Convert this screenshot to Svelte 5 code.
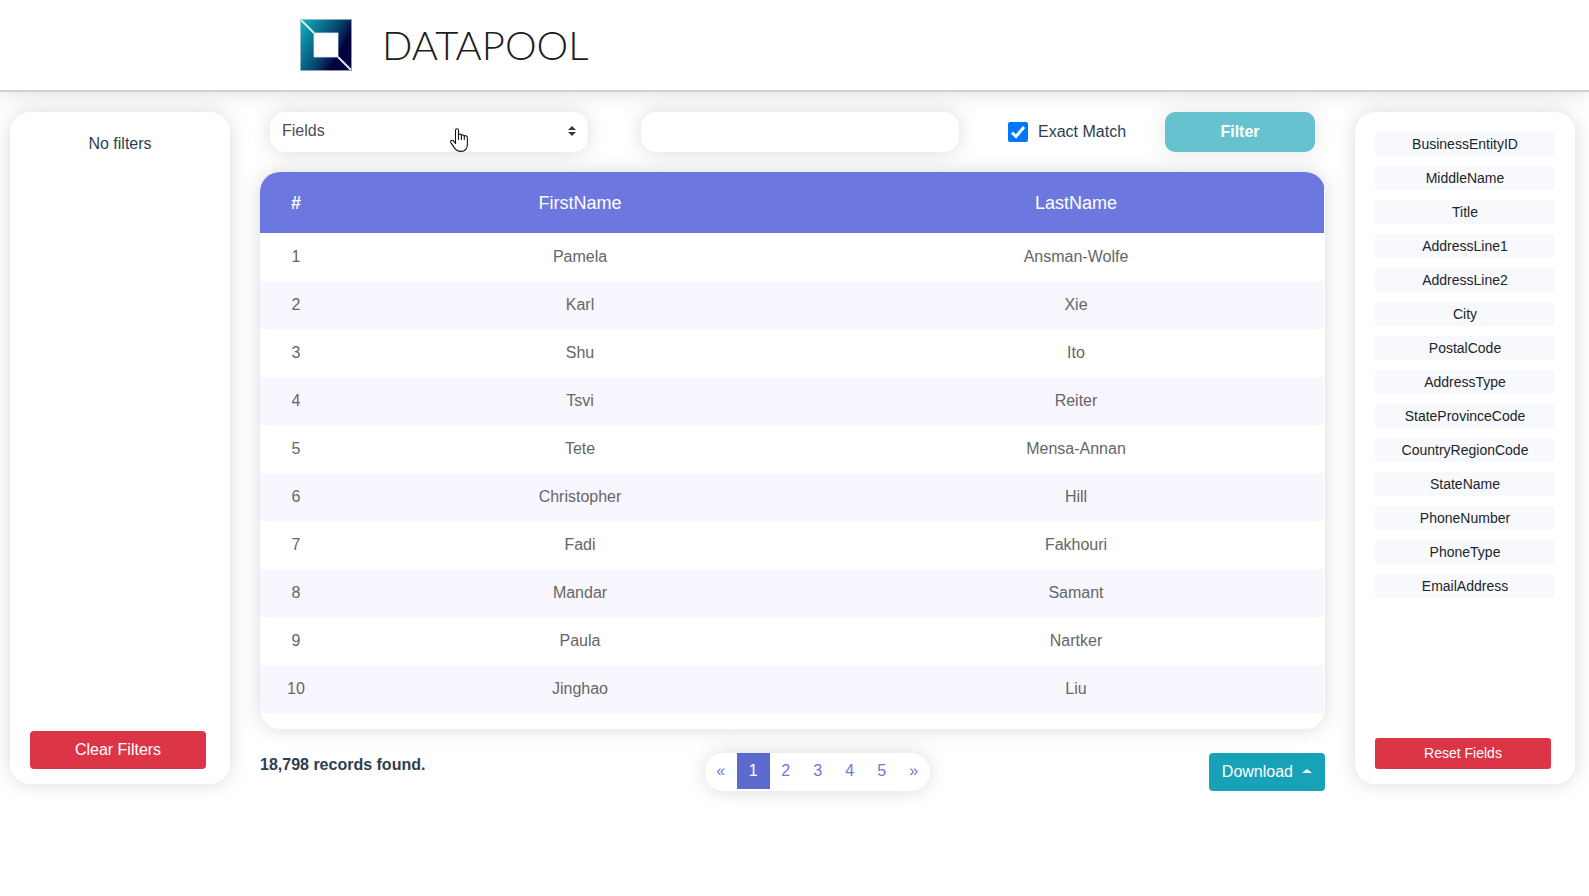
<script>
  const people = [
    ['Pamela', 'Ansman-Wolfe'],
    ['Karl', 'Xie'],
    ['Shu', 'Ito'],
    ['Tsvi', 'Reiter'],
    ['Tete', 'Mensa-Annan'],
    ['Christopher', 'Hill'],
    ['Fadi', 'Fakhouri'],
    ['Mandar', 'Samant'],
    ['Paula', 'Nartker'],
    ['Jinghao', 'Liu'],
  ];
  const fields = [
    'BusinessEntityID', 'MiddleName', 'Title', 'AddressLine1', 'AddressLine2',
    'City', 'PostalCode', 'AddressType', 'StateProvinceCode', 'CountryRegionCode',
    'StateName', 'PhoneNumber', 'PhoneType', 'EmailAddress',
  ];
  const pages = ['«', '1', '2', '3', '4', '5', '»'];
  let current = $state('1');
  let exact = $state(true);
  let term = $state('');
</script>

<header>
  <svg class="logo" width="52" height="52" viewBox="0 0 52 52" aria-hidden="true">
    <defs>
      <linearGradient id="ink" gradientUnits="userSpaceOnUse" x1="0" y1="6" x2="42" y2="30">
        <stop offset="0" stop-color="#0cb0bc" />
        <stop offset="0.45" stop-color="#086a8c" />
        <stop offset="0.75" stop-color="#063a68" />
        <stop offset="1" stop-color="#02023c" />
      </linearGradient>
    </defs>
    <rect width="52" height="52" fill="url(#ink)" />
    <path d="M1 1L14 14M38 38L51 51" stroke="#dfe6f0" stroke-width="2" />
    <rect x="14" y="14" width="24" height="24" fill="#fff" stroke="#dfe6f0" stroke-width="0.8" />
    <rect x="0.5" y="0.5" width="51" height="51" fill="none" stroke="#c5d0de" stroke-opacity="0.7" />
  </svg>
  <h1>DATAPOOL</h1>
</header>

<main>
  <aside class="panel">
    <p class="empty">No filters</p>
    <button class="btn danger" type="button">Clear Filters</button>
  </aside>

  <section class="content">
    <form class="toolbar" onsubmit={(e) => e.preventDefault()}>
      <div class="query">
        <div class="picker">
          <select class="control" aria-label="Fields">
            <option>Fields</option>
          </select>
          <svg class="pointer" width="18" height="24" viewBox="0 0 18 24" aria-hidden="true">
            <path
              d="M5.5 15.5V2.2C5.5 .2 8.5 .2 8.5 2.2V6.6C9.2 5.8 11.2 6 11.3 7.2C12.2 6.6 13.9 6.8 14.2 8C15.8 7.2 17.4 8 17.4 9.8V16C17.4 21 14.8 23.4 10.8 23.4C7.6 23.4 5.8 22 4.2 19.6L.9 14.6C0 12.8 2 11.6 3.4 12.8L5.5 15.2M8.5 6.6V11.4M11.4 7.2V11.4M14.3 8V11.4"
              fill="#fff" stroke="#15151f" stroke-width="1.1" stroke-linecap="round" stroke-linejoin="round" />
          </svg>
        </div>
        <input class="control term" type="text" aria-label="Value" bind:value={term} />
      </div>
      <label class="exact">
        <input type="checkbox" bind:checked={exact} />
        <span>Exact Match</span>
      </label>
      <button class="filter" type="submit" disabled>Filter</button>
    </form>

    <div class="card">
      <table>
        <thead>
          <tr><th class="num">#</th><th>FirstName</th><th>LastName</th></tr>
        </thead>
        <tbody>
          {#each people as [first, last], i}
            <tr><td>{i + 1}</td><td>{first}</td><td>{last}</td></tr>
          {/each}
        </tbody>
      </table>
    </div>

    <div class="footer">
      <strong>18,798 records found.</strong>
      <nav aria-label="Pages">
        {#each pages as page}
          <button type="button" class:active={page === current} onclick={() => (current = page)}>{page}</button>
        {/each}
      </nav>
      <button class="btn download" type="button">Download<span class="caret"></span></button>
    </div>
  </section>

  <aside class="panel">
    <div class="chips">
      {#each fields as field}
        <button class="chip" type="button">{field}</button>
      {/each}
    </div>
    <button class="btn danger small" type="button">Reset Fields</button>
  </aside>
</main>

<style>
  :global(body) {
    margin: 0;
    background: #fff;
    color: #2c3e50;
    font: 16px/24px "Liberation Sans", Arial, sans-serif;
  }
  :global(#app) *,
  header, main {
    box-sizing: border-box;
  }
  button, input, select {
    font: inherit;
    margin: 0;
  }
  header {
    display: flex;
    align-items: center;
    gap: 30px;
    height: 92px;
    padding: 0 300px;
    border-bottom: 2px solid #d3d0d0;
    box-shadow: 0 0 20px rgba(0, 0, 0, 0.15);
  }
  .logo {
    flex: none;
  }
  h1 {
    margin: 0;
    color: #1c1c1c;
    font: 300 40px/48px Lato, sans-serif;
  }
  main {
    display: grid;
    grid-template-columns: 220px minmax(0, 1fr) 220px;
    gap: 30px;
    align-items: start;
    padding: 20px 14px 20px 10px;
  }
  .panel {
    display: flex;
    flex-direction: column;
    justify-content: space-between;
    align-items: flex-start;
    min-height: 75vh;
    padding: 20px 20px 15px;
    border-radius: 20px;
    background: #fff;
    box-shadow: 0 0 20px rgba(0, 0, 0, 0.15);
  }
  .empty {
    align-self: stretch;
    margin: 0;
    text-align: center;
  }
  .btn {
    padding: 6px 12px;
    border: 1px solid transparent;
    border-radius: 4px;
    color: #fff;
    line-height: 24px;
    cursor: pointer;
  }
  .danger {
    width: 176px;
    background: #dc3545;
  }
  .small {
    padding: 4px 8px;
    border-radius: 3px;
    font-size: 14px;
    line-height: 21px;
  }
  .toolbar {
    display: grid;
    grid-template-columns: minmax(0, 1fr) 118px 150px;
    column-gap: 39px;
    align-items: center;
    padding: 0 10px;
  }
  .query {
    display: grid;
    grid-template-columns: repeat(2, minmax(0, 1fr));
    column-gap: 53px;
    padding-right: 10px;
  }
  .picker {
    position: relative;
  }
  .control {
    display: block;
    width: 100%;
    height: 40px;
    border: 0;
    border-radius: 15px;
    outline: 0;
    background: #fff;
    color: #495057;
    box-shadow: 0 0 20px rgba(0, 0, 0, 0.15);
  }
  select.control {
    padding: 6px 28px 8px 12px;
    appearance: none;
    background: #fff url("data:image/svg+xml,%3csvg xmlns='http://www.w3.org/2000/svg' width='8' height='10' viewBox='0 0 4 5'%3e%3cpath fill='%23343a40' d='M2 0L0 2h4zm0 5L0 3h4z'/%3e%3c/svg%3e") no-repeat right 12px top 14px / 8px 10px;
  }
  .pointer {
    position: absolute;
    left: 180px;
    top: 16px;
    pointer-events: none;
  }
  .term {
    padding: 6px 12px;
  }
  .exact {
    display: flex;
    align-items: center;
    gap: 10px;
    white-space: nowrap;
  }
  .exact input {
    flex: none;
    width: 20px;
    height: 20px;
    border-radius: 2px;
    appearance: none;
    background: #0075ff url("data:image/svg+xml,%3csvg xmlns='http://www.w3.org/2000/svg' viewBox='0 0 20 20'%3e%3cpath fill='none' stroke='white' stroke-width='3' d='M4 10.5l4 4L16 5'/%3e%3c/svg%3e");
  }
  .exact input:not(:checked) {
    background: #fff;
    border: 1px solid #767676;
  }
  .filter {
    height: 40px;
    border: 0;
    border-radius: 10px;
    background: #17a2b8;
    color: #fff;
    font-weight: 700;
    opacity: 0.65;
    box-shadow: 0 0 20px rgba(0, 0, 0, 0.15);
  }
  .card {
    margin-top: 20px;
    padding: 0 1px 16px 0;
    overflow: hidden;
    border-radius: 20px;
    background: #fff;
    box-shadow: 0 0 20px rgba(0, 0, 0, 0.15);
  }
  table {
    width: 100%;
    table-layout: fixed;
    border-collapse: collapse;
    text-align: center;
  }
  th {
    height: 61px;
    padding: 0;
    background: #6c77e0;
    color: #fff;
    font-size: 18px;
    font-weight: 400;
  }
  .num {
    width: 72px;
    font-weight: 700;
  }
  td {
    height: 48px;
    padding: 0;
    color: #666;
  }
  tbody tr:nth-child(even) {
    background: #f8f6ff;
  }
  .footer {
    display: flex;
    justify-content: space-between;
    align-items: center;
    margin-top: 24px;
  }
  strong {
    padding-bottom: 14px;
  }
  nav {
    display: flex;
    height: 38px;
    padding-bottom: 2px;
    overflow: hidden;
    border-radius: 19px;
    background: #fff;
    box-shadow: 0 0 20px rgba(0, 0, 0, 0.15);
  }
  nav button {
    width: 32px;
    padding: 0;
    border: 0;
    background: none;
    color: #6c77e0;
    cursor: pointer;
  }
  nav .active {
    width: 33px;
    background: #5c6ad0;
    color: #fff;
  }
  .download {
    background: #17a2b8;
  }
  .caret {
    display: inline-block;
    margin-left: 9px;
    vertical-align: 4px;
    border: 5px solid transparent;
    border-top: 0;
    border-bottom: 4px solid #fff;
  }
  .chips {
    display: grid;
    gap: 10px;
    width: 100%;
  }
  .chip {
    height: 24px;
    padding: 0;
    border: 0;
    border-radius: 4px;
    background: #f8f9fc;
    color: #212529;
    font-size: 14px;
    cursor: pointer;
  }
</style>
